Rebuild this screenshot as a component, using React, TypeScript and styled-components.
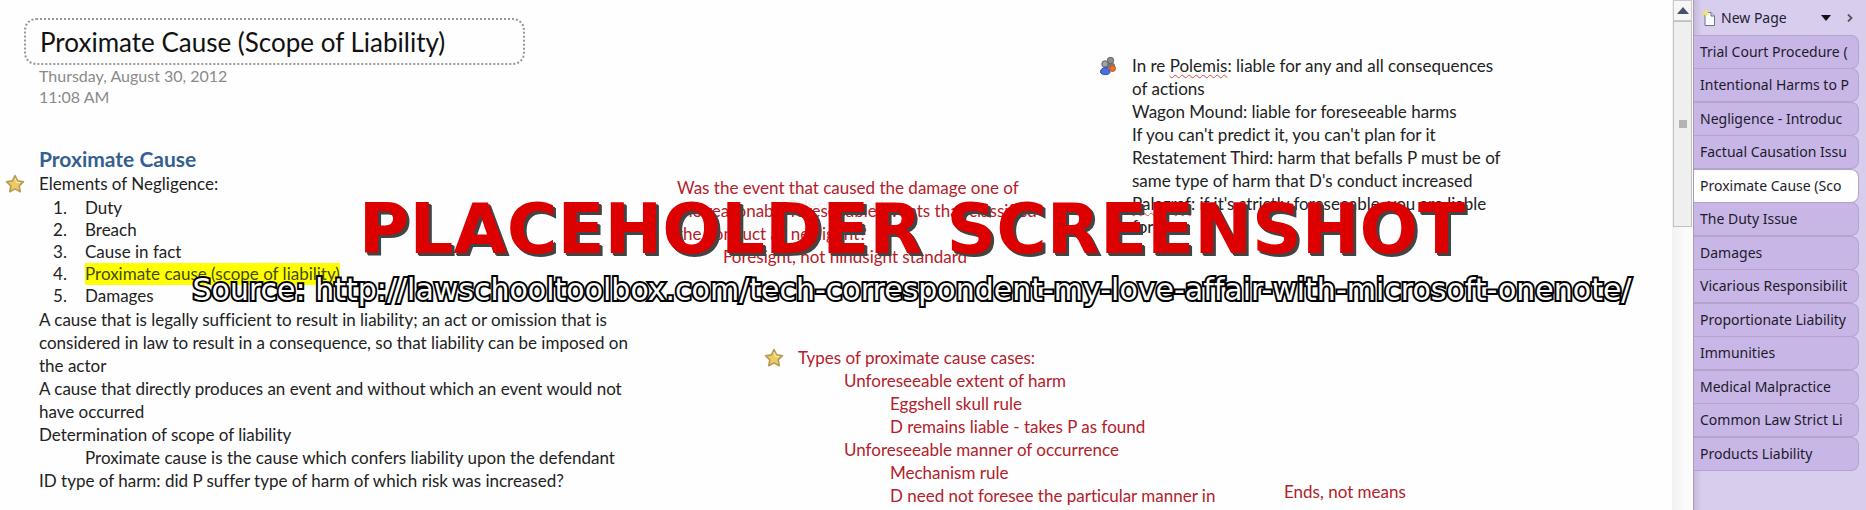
import React from 'react';
import styled, { createGlobalStyle } from 'styled-components';

const Global = createGlobalStyle`
  * { box-sizing: border-box; }
  body { margin: 0; background: #fff; overflow: hidden; }
`;

const Shell = styled.div`
  position: relative;
  display: flex;
  min-height: 100vh;
  overflow: hidden;
  font-family: Lato, "Liberation Sans", sans-serif;
  font-size: 17px;
  line-height: 23px;
  font-variant-ligatures: none;
  color: #222;
`;

const Canvas = styled.main`
  position: relative;
  flex: 1;
  min-width: 0;
  height: 100vh;
  overflow: hidden;
  background: #fefefe;
`;

const PageHeader = styled.header`
  padding: 18px 0 0 24px;
  color: #8a8a8a;
`;

const TitleBox = styled.h1`
  width: 501px;
  height: 47px;
  margin: 0;
  padding: 0 14px;
  border: 2px dotted #999;
  border-radius: 12px;
  font-size: 26px;
  line-height: 45px;
  font-weight: 400;
  color: #111;
`;

const Stamp = styled.time`
  display: block;
  padding-left: 15px;
  font-size: 16px;
  line-height: 21px;
`;

/* A note container, placed freely on the page canvas. */
const Note = styled.section<{ $x: number; $y: number; $red?: boolean }>`
  position: absolute;
  left: ${(p) => p.$x}px;
  top: ${(p) => p.$y}px;
  color: ${(p) => (p.$red ? '#b3202a' : '#222')};
`;

const Heading = styled.h2`
  margin: 0;
  font-size: 21px;
  line-height: 26px;
  font-weight: 700;
  color: #365f91;
`;

const Line = styled.p<{ $level?: number }>`
  position: relative;
  margin: 0;
  padding-left: ${(p) => (p.$level || 0) * 46}px;
  white-space: nowrap;
`;

const Elements = styled.ol`
  margin: 0;
  padding: 2px 0 1px 14px;
  line-height: 22px;
  list-style: none;
  counter-reset: element;
`;

const Element = styled.li`
  display: flex;
  counter-increment: element;
  &::before {
    content: counter(element) ".";
    width: 32px;
  }
`;

const Mark = styled.mark`
  background: #ff0;
  color: #444a10;
`;

const Misspelt = styled.span`
  text-decoration: underline wavy #d0504f 1px;
  text-underline-offset: 2px;
`;

const Tag = styled.span`
  position: absolute;
  left: -34px;
  top: 2px;
  line-height: 0;
`;

const Ghost = styled.span`
  position: absolute;
  left: 788px;
  top: 194px;
  font-size: 15px;
  color: #f0eeee;
`;

const Scrollbar = styled.div`
  display: flex;
  flex-direction: column;
  width: 21px;
  height: 100vh;
  background: linear-gradient(90deg, #f1f1f1, #fbfbfb 60%);
`;

const ScrollButton = styled.button`
  display: flex;
  align-items: center;
  justify-content: center;
  height: 21px;
  width: 19px;
  margin-left: 1px;
  padding: 0;
  border: 1px solid #c9c9c9;
  background: #f6f6f6;
`;

const Thumb = styled.div`
  display: flex;
  align-items: center;
  justify-content: center;
  width: 19px;
  height: 206px;
  margin-left: 1px;
  border: 1px solid #bfc3bf;
  background: #efefef;
  &::after {
    content: "";
    width: 8px;
    height: 8px;
    background: #b4b4b4;
  }
`;

const Sidebar = styled.aside`
  width: 173px;
  height: 100vh;
  padding-right: 7px;
  border-left: 1px solid #a79bb8;
  background: linear-gradient(90deg, #c6badb, #d9cdee 8px);
  font-family: "Noto Sans", sans-serif;
  font-size: 14px;
`;

const NewPageBar = styled.div`
  display: flex;
  align-items: center;
  height: 35px;
  padding-left: 8px;
`;

const PlainButton = styled.button`
  display: flex;
  align-items: center;
  gap: 5px;
  padding: 0;
  border: 0;
  background: none;
  font: inherit;
  line-height: 20px;
  white-space: nowrap;
  color: #222233;
`;

const BarActions = styled.div`
  display: flex;
  align-items: center;
  gap: 16px;
  margin-left: auto;
  padding-right: 6px;
`;

const Tab = styled.button<{ $active?: boolean }>`
  display: block;
  width: 100%;
  height: 34px;
  margin-bottom: -1px;
  padding: 0 6px;
  border: 1px solid #b3a3cf;
  border-left: 0;
  border-radius: 0 8px 8px 0;
  background: ${(p) => (p.$active ? '#fefefe' : '#c8b7e6')};
  font: inherit;
  line-height: 32px;
  text-align: left;
  white-space: nowrap;
  overflow: hidden;
  color: #1d1a2c;
  &:nth-of-type(even) {
    margin-bottom: 0;
  }
`;

const Watermark = styled.div`
  position: absolute;
  inset: 191px 42px auto 0;
  display: flex;
  flex-direction: column;
  align-items: center;
  white-space: nowrap;
  font-family: "DejaVu Sans", sans-serif;
`;

const Banner = styled.strong`
  font-size: 69px;
  line-height: 76px;
  color: #d00;
  text-shadow: 2px 2px 0 #444, 3px 3px 0 #444;
`;

const Source = styled.span`
  font-size: 30px;
  line-height: 46px;
  color: #fff;
  -webkit-text-stroke: 4px #000;
  paint-order: stroke fill;
`;

const Star = () => (
  <svg width="20" height="20" viewBox="0 0 20 20" aria-hidden="true">
    <path d="M10 1.5l2.6 5.4 5.9.8-4.3 4.1 1 5.9-5.2-2.8-5.2 2.8 1-5.9L1.5 7.7l5.9-.8z" fill="#eccb62" stroke="#b79a55" strokeWidth="1.6" strokeLinejoin="round" />
    <path d="M10 4.5l1.6 3.6 3.4.5" fill="none" stroke="#f8e7a6" strokeWidth="1.2" />
  </svg>
);

const People = () => (
  <svg width="20" height="20" viewBox="0 0 20 20" aria-hidden="true">
    <path d="M8 9c0-3 9-3 9 0v3H8z" fill="#777a80" />
    <circle cx="12.5" cy="4.5" r="3.2" fill="#8d8d90" stroke="#5f6064" />
    <circle cx="7" cy="8" r="3.2" fill="#a3a3a6" stroke="#5f6064" />
    <path d="M2.5 16c0-6 9.5-6 9.5 0 0 3.5-9.5 3.5-9.5 0z" fill="#4a6fdc" stroke="#2f4fb5" />
    <circle cx="14.5" cy="12.5" r="3" fill="#e2732c" stroke="#b9551d" />
  </svg>
);

const PageIcon = () => (
  <svg width="14" height="18" viewBox="0 0 14 18" aria-hidden="true">
    <path d="M3 3.5h6l3.5 3.5v9.500H3z" fill="#fbfcff" stroke="#66758f" />
    <path d="M9 3.5V7h3.5" fill="#cfd8e8" stroke="#66758f" />
    <path d="M4 0l1 2.500L7.5 2 6 4l1.5 2.200L5 5.700 4 8 3 5.700.5 6.200 1.5 4 0 2l2.800.5z" fill="#f3e46d" />
  </svg>
);

const tabs = [
  'Trial Court Procedure (',
  'Intentional Harms to P',
  'Negligence - Introduc',
  'Factual Causation Issu',
  'Proximate Cause (Sco',
  'The Duty Issue',
  'Damages',
  'Vicarious Responsibilit',
  'Proportionate Liability',
  'Immunities',
  'Medical Malpractice',
  'Common Law Strict Li',
  'Products Liability',
];

export default function App() {
  return (
    <Shell>
      <Global />
      <Canvas>
        <PageHeader>
          <TitleBox>Proximate Cause (Scope of Liability)</TitleBox>
          <Stamp>Thursday, August 30, 2012</Stamp>
          <Stamp>11:08 AM</Stamp>
        </PageHeader>

        <Note $x={39} $y={146}>
          <Heading>Proximate Cause</Heading>
          <Line><Tag><Star /></Tag>Elements of Negligence:</Line>
          <Elements>
            <Element>Duty</Element>
            <Element>Breach</Element>
            <Element>Cause in fact</Element>
            <Element><Mark>Proximate cause (scope of liability)</Mark></Element>
            <Element>Damages</Element>
          </Elements>
          <Line>A cause that is legally sufficient to result in liability; an act or omission that is</Line>
          <Line>considered in law to result in a consequence, so that liability can be imposed on</Line>
          <Line>the actor</Line>
          <Line>A cause that directly produces an event and without which an event would not</Line>
          <Line>have occurred</Line>
          <Line>Determination of scope of liability</Line>
          <Line $level={1}>Proximate cause is the cause which confers liability upon the defendant</Line>
          <Line>ID type of harm: did P suffer type of harm of which risk was increased?</Line>
        </Note>

        <Ghost>Full-screen Snip</Ghost>

        <Note $x={677} $y={176} $red>
          <Line>Was the event that caused the damage one of</Line>
          <Line>the reasonably foreseeable events that classified</Line>
          <Line>the conduct as negligent?</Line>
          <Line $level={1}>Foresight, not hindsight standard</Line>
        </Note>

        <Note $x={1132} $y={54}>
          <Line><Tag><People /></Tag>In re <Misspelt>Polemis</Misspelt>: liable for any and all consequences</Line>
          <Line>of actions</Line>
          <Line>Wagon Mound: liable for foreseeable harms</Line>
          <Line>If you can't predict it, you can't plan for it</Line>
          <Line>Restatement Third: harm that befalls P must be of</Line>
          <Line>same type of harm that D's conduct increased</Line>
          <Line><Misspelt>Palsgraf</Misspelt>: if it's strictly foreseeable, you are liable</Line>
          <Line>for it</Line>
        </Note>

        <Note $x={798} $y={346} $red>
          <Line><Tag><Star /></Tag>Types of proximate cause cases:</Line>
          <Line $level={1}>Unforeseeable extent of harm</Line>
          <Line $level={2}>Eggshell skull rule</Line>
          <Line $level={2}>D remains liable - takes P as found</Line>
          <Line $level={1}>Unforeseeable manner of occurrence</Line>
          <Line $level={2}>Mechanism rule</Line>
          <Line $level={2}>D need not foresee the particular manner in</Line>
        </Note>

        <Note $x={1284} $y={480} $red>
          <Line>Ends, not means</Line>
        </Note>
      </Canvas>

      <Scrollbar>
        <ScrollButton aria-label="Scroll up">
          <svg width="12" height="7" viewBox="0 0 12 7" aria-hidden="true"><path d="M6 0l6 7H0z" fill="#465070" /></svg>
        </ScrollButton>
        <Thumb />
      </Scrollbar>

      <Sidebar>
        <NewPageBar>
          <PlainButton><PageIcon />New Page</PlainButton>
          <BarActions>
            <PlainButton aria-label="New page options">
              <svg width="10" height="6" viewBox="0 0 10 6" aria-hidden="true"><path d="M0 0h10L5 6z" fill="#111" /></svg>
            </PlainButton>
            <PlainButton aria-label="Collapse page tabs">
              <svg width="6" height="8" viewBox="0 0 6 8" aria-hidden="true"><path d="M1 .5L4.5 4 1 7.5" fill="none" stroke="#555" strokeWidth="1.8" /></svg>
            </PlainButton>
          </BarActions>
        </NewPageBar>
        <nav aria-label="Pages">
          {tabs.map((title) => (
            <Tab key={title} $active={title === 'Proximate Cause (Sco'}>{title}</Tab>
          ))}
        </nav>
      </Sidebar>

      <Watermark>
        <Banner>PLACEHOLDER SCREENSHOT</Banner>
        <Source>Source: http://lawschooltoolbox.com/tech-correspondent-my-love-affair-with-microsoft-onenote/</Source>
      </Watermark>
    </Shell>
  );
}
